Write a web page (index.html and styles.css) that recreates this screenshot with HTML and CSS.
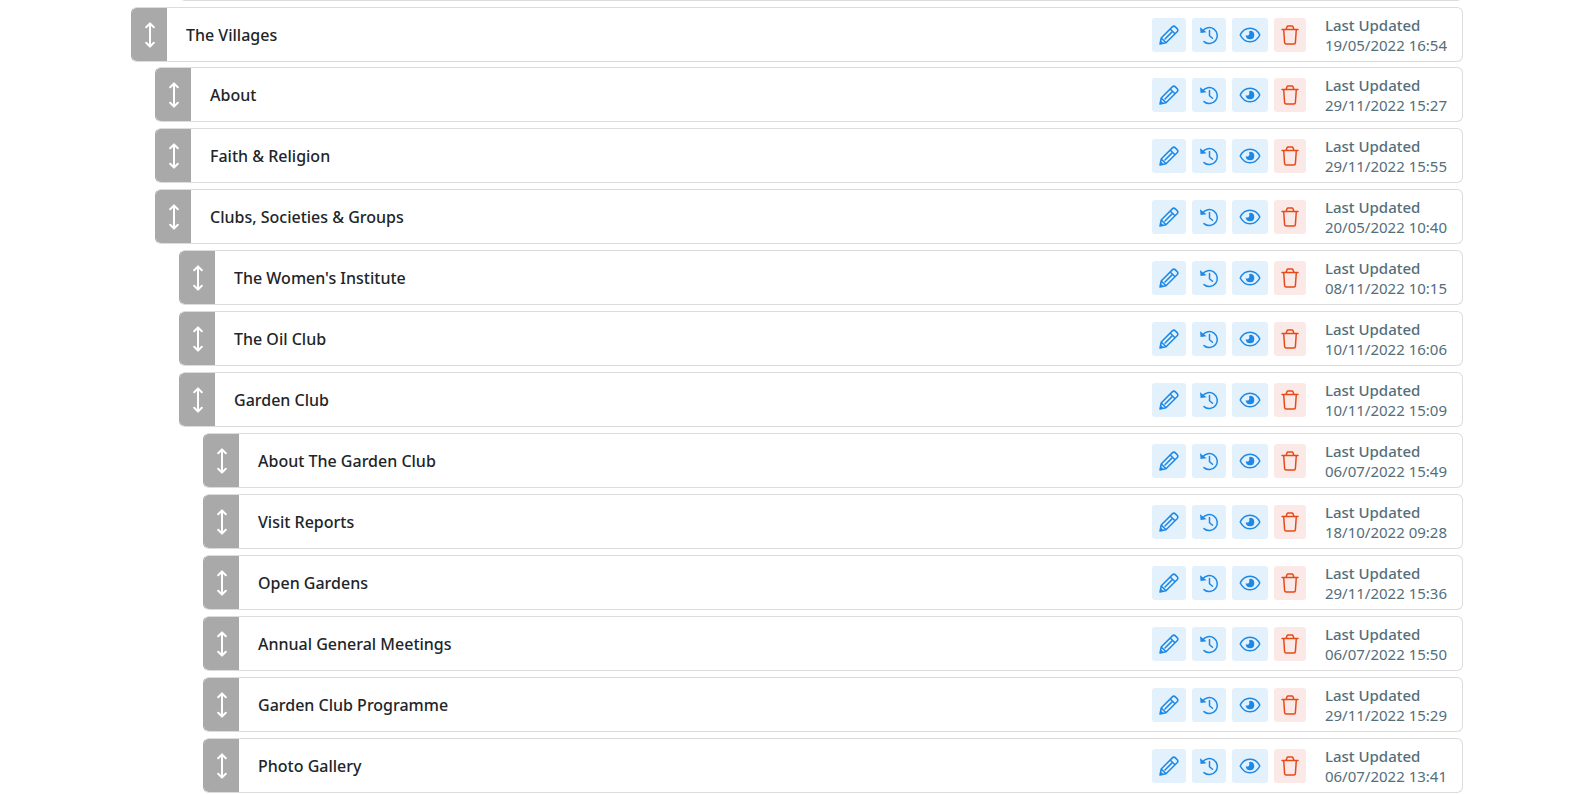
FILE: index.html
```html
<!DOCTYPE html>
<html lang="en">
<head>
<meta charset="utf-8">
<title>Pages</title>
<link rel="stylesheet" href="styles.css">
</head>
<body>
<svg class="sprite" aria-hidden="true">
  <symbol id="i-move" viewBox="0 0 10 26"><path d="M5 2v22M1.200 5.200 5 1.400l3.800 3.800M1.200 20.800 5 24.600l3.800-3.800"/></symbol>
  <symbol id="i-edit" viewBox="0 0 20 20"><path d="M1 19l1.200-6L13.300 1.900a2.200 2.200 0 0 1 3.100 0l1.700 1.700a2.200 2.200 0 0 1 0 3.100L7 17.800zM2.200 13l4.800 4.800M11.200 4l4.800 4.800M12.600 7.400 6 14"/><path class="solid" d="M1 19l.7-3.600 2.900 2.900z"/></symbol>
  <symbol id="i-history" viewBox="0 0 20 20"><path d="M3.600 6.200A8 8 0 1 1 5 16.600M10.500 5.500v5.200l3 2.600"/><path class="solid" d="M1 2.200 1.600 8l6-.8z"/></symbol>
  <symbol id="i-view" viewBox="0 0 22 20"><path d="M1.200 10C3.200 6 6.600 3.300 11 3.300S18.800 6 20.800 10c-2 4-5.400 6.700-9.800 6.700S3.200 14 1.200 10z"/><path class="solid" d="M11 5.700a4.300 4.300 0 1 1-4.300 4.600c1.500.6 2.600.3 3.200-.6.600-.8.600-1.900.1-2.900A4.300 4.300 0 0 1 11 5.700z"/></symbol>
  <symbol id="i-delete" viewBox="0 0 18 20"><path d="M1 4.500h16M2.700 4.500l.9 13a1.500 1.500 0 0 0 1.500 1.500h7.800a1.500 1.500 0 0 0 1.500-1.500l.9-13M5 4.500l1-2.700A1.200 1.200 0 0 1 7.100 1h3.800a1.200 1.200 0 0 1 1.100.8l1 2.700"/></symbol>
</svg>
<main class="tree" id="tree">
  <div class="row row-clipped"></div>
</main>
<template id="row">
  <li class="node">
    <article class="row">
      <button class="handle" type="button" aria-label="Move"><svg class="icon icon-move"><use href="#i-move"/></svg></button>
      <h2 class="title"></h2>
      <div class="actions">
        <button class="action" type="button" aria-label="Edit"><svg class="icon"><use href="#i-edit"/></svg></button>
        <button class="action" type="button" aria-label="History"><svg class="icon"><use href="#i-history"/></svg></button>
        <button class="action" type="button" aria-label="View"><svg class="icon icon-view"><use href="#i-view"/></svg></button>
        <button class="action action-delete" type="button" aria-label="Delete"><svg class="icon icon-delete"><use href="#i-delete"/></svg></button>
      </div>
      <div class="meta"><strong class="meta-label">Last Updated</strong><time class="meta-date"></time></div>
    </article>
  </li>
</template>
<script src="tree.js"></script>
</body>
</html>
```
FILE: styles.css
```css
* { box-sizing: border-box; }
body {
  margin: 0;
  background: #fff;
  color: #212529;
  font-family: "Noto Sans", "Open Sans", sans-serif;
  overflow-x: hidden;
}
.sprite { position: absolute; width: 0; height: 0; }
.tree { max-width: 1332px; margin: 0 auto; }
.branch { list-style: none; margin: 0; padding: 0; }
.branch .branch { padding-left: 24px; }
.row {
  display: flex;
  align-items: center;
  min-height: 55px;
  margin-bottom: 6px;
  border: 1px solid #dcdcdc;
  border-radius: 6px;
  background: #fff;
  overflow: hidden;
}
.node > .row { border-left-color: #a9a9a9; }
.tree > .branch > .node > .row { margin-bottom: 5px; }
.row-clipped { margin: -54px 0 6px 48px; }
.handle {
  display: flex;
  align-items: center;
  justify-content: center;
  align-self: stretch;
  width: 35px;
  padding: 0;
  border: 0;
  background: #a9a9a9;
  color: #fff;
  cursor: move;
}
.title {
  flex: 1;
  margin: 0;
  padding-left: 19px;
  font-size: 16px;
  font-weight: 500;
  line-height: 24px;
}
.actions { display: flex; gap: 6px; }
.action {
  display: flex;
  align-items: center;
  height: 34px;
  padding: 0 7px;
  border: 0;
  border-radius: 3px;
  background: #e3f1fd;
  color: #1e88e5;
  cursor: pointer;
}
.action-delete { background: #fbe9e7; color: #e64a19; }
.icon {
  display: block;
  width: 20px;
  height: 20px;
  fill: none;
  stroke: currentColor;
  stroke-width: 1.5;
  stroke-linecap: round;
  stroke-linejoin: round;
}
.icon-move { width: 10px; height: 26px; stroke-width: 2; }
.icon-view { width: 22px; }
.icon-delete { width: 18px; }
.solid { fill: currentColor; stroke: none; }
.meta {
  display: flex;
  flex-direction: column;
  padding: 0 15px 0 19px;
  color: #546e7a;
  font-size: 15px;
  line-height: 20px;
  white-space: nowrap;
}
.meta-label { font-weight: 500; }
```
FILE: tree.js
```javascript
const pages = [
  { title: "The Villages", updated: "19/05/2022 16:54", children: [
    { title: "About", updated: "29/11/2022 15:27" },
    { title: "Faith & Religion", updated: "29/11/2022 15:55" },
    { title: "Clubs, Societies & Groups", updated: "20/05/2022 10:40", children: [
      { title: "The Women's Institute", updated: "08/11/2022 10:15" },
      { title: "The Oil Club", updated: "10/11/2022 16:06" },
      { title: "Garden Club", updated: "10/11/2022 15:09", children: [
        { title: "About The Garden Club", updated: "06/07/2022 15:49" },
        { title: "Visit Reports", updated: "18/10/2022 09:28" },
        { title: "Open Gardens", updated: "29/11/2022 15:36" },
        { title: "Annual General Meetings", updated: "06/07/2022 15:50" },
        { title: "Garden Club Programme", updated: "29/11/2022 15:29" },
        { title: "Photo Gallery", updated: "06/07/2022 13:41" }
      ] }
    ] }
  ] }
];
const template = document.getElementById("row");
function branch(items) {
  const list = document.createElement("ul");
  list.className = "branch";
  for (const item of items) {
    const node = template.content.cloneNode(true).firstElementChild;
    node.querySelector(".title").textContent = item.title;
    node.querySelector(".meta-date").textContent = item.updated;
    if (item.children) node.append(branch(item.children));
    list.append(node);
  }
  return list;
}
document.getElementById("tree").append(branch(pages));
```
